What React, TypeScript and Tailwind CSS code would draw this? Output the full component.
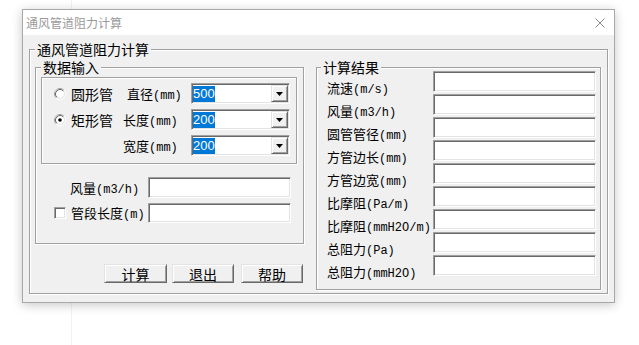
import React from "react";

const etched = "border border-[#a0a0a0] shadow-[inset_1px_1px_0_#fff,1px_1px_0_#fff]";
const sunken =
  "bg-white border border-t-[#a0a0a0] border-l-[#a0a0a0] border-r-white border-b-white shadow-[inset_1px_1px_0_#696969,inset_-1px_-1px_0_#e3e3e3]";
const raised =
  "bg-[#f0f0f0] border border-t-[#e3e3e3] border-l-[#e3e3e3] border-r-[#696969] border-b-[#696969] shadow-[inset_1px_1px_0_#fff,inset_-1px_-1px_0_#a0a0a0]";

const Label = ({ c, a, className = "" }: { c: string; a?: string; className?: string }) => (
  <span className={"block whitespace-nowrap leading-[16px] " + className}>
    <span className="text-[13px]">{c}</span>
    {a && <span className="font-['Liberation_Mono',monospace] text-[12px]">{a}</span>}
  </span>
);

const Radio = ({ checked }: { checked?: boolean }) => (
  <svg width="12" height="12" viewBox="0 0 12 12" className="shrink-0">
    <circle cx="6" cy="6" r="5.5" fill="none" stroke="#ffffff" />
    <path d="M2.11 9.89 A5.5 5.5 0 0 1 9.89 2.11" fill="none" stroke="#a0a0a0" />
    <circle cx="6" cy="6" r="4.5" fill="#fff" stroke="#e3e3e3" />
    <path d="M2.82 9.18 A4.5 4.5 0 0 1 9.18 2.82" fill="none" stroke="#696969" />
    {checked && <circle cx="6" cy="6" r="1.8" fill="#000" />}
  </svg>
);

const Combo = ({ value }: { value: string }) => (
  <div className={"w-[99px] h-[21px] flex items-center pl-[1px] pr-[1px] " + sunken}>
    <span className="flex-1 flex items-center">
      <span className="bg-[#0078d7] text-white font-['Liberation_Sans',sans-serif] text-[13px] leading-[16px]">
        {value}
      </span>
    </span>
    <span className={"w-[17px] h-[17px] flex items-center justify-center " + raised}>
      <svg width="7" height="4" viewBox="0 0 7 4">
        <polygon points="0,0 7,0 3.5,4" fill="#000" />
      </svg>
    </span>
  </div>
);

const Btn = ({ text, className = "" }: { text: string; className?: string }) => (
  <button className={"h-[19px] flex items-center justify-center text-[14px] leading-[16px] " + raised + " " + className}>
    {text}
  </button>
);

const results: [string, string][] = [
  ["流速", "(m/s)"],
  ["风量", "(m3/h)"],
  ["圆管管径", "(mm)"],
  ["方管边长", "(mm)"],
  ["方管边宽", "(mm)"],
  ["比摩阻", "(Pa/m)"],
  ["比摩阻", "(mmH2O/m)"],
  ["总阻力", "(Pa)"],
  ["总阻力", "(mmH2O)"],
];

export default function App() {
  return (
    <div className="relative w-[639px] h-[345px] bg-white overflow-hidden pt-[9px] pl-[22px] font-['Noto_Sans_CJK_SC',sans-serif] text-black">
      <div className="absolute left-[71px] top-0 h-full w-px bg-[#f2f2f2]" />
      <div className="relative w-[593px] h-[294px] border border-[#a8a8a8] bg-[#f0f0f0] shadow-[0_2px_10px_rgba(0,0,0,0.22)] flex flex-col">
        {/* title bar */}
        <div className="h-[25px] bg-white flex items-center justify-between pl-[3px] pr-[9px]">
          <span className="text-[12px] leading-[16px] text-[#9a9a9a]">通风管道阻力计算</span>
          <svg width="10" height="10" viewBox="0 0 10 10">
            <path d="M0.5 0.5 L9.5 9.5 M9.5 0.5 L0.5 9.5" stroke="#8a8a8a" strokeWidth="1" />
          </svg>
        </div>

        <div className="flex-1 px-[6px] pt-[5px]">
          <fieldset className={"min-w-0 pb-[3px] " + etched}>
            <legend className="ml-[5px] px-[2px] text-[14px] leading-[18px] bg-[#f0f0f0]">通风管道阻力计算</legend>
            <div className="flex pl-[5px] pr-[6px]">
              {/* left column */}
              <div className="w-[269px] flex flex-col">
                <fieldset className={"min-w-0 pb-[20px] " + etched}>
                  <legend className="ml-[5px] px-[2px] text-[14px] leading-[18px] bg-[#f0f0f0]">数据输入</legend>
                  <div className={"mt-[1px] ml-[5px] w-[256px] pt-[5px] pb-[7px] pl-[12px] flex flex-col gap-[5px] " + etched}>
                    <div className="h-[21px] flex items-center">
                      <div className="w-[69px] flex items-center gap-[5px]">
                        <Radio />
                        <span className="text-[14px] leading-[16px]">圆形管</span>
                      </div>
                      <div className="w-[68px] pl-[4px]">
                        <Label c="直径" a="(mm)" />
                      </div>
                      <Combo value="500" />
                    </div>
                    <div className="h-[21px] flex items-center">
                      <div className="w-[69px] flex items-center gap-[5px]">
                        <Radio checked />
                        <span className="text-[14px] leading-[16px]">矩形管</span>
                      </div>
                      <div className="w-[68px]">
                        <Label c="长度" a="(mm)" />
                      </div>
                      <Combo value="200" />
                    </div>
                    <div className="h-[21px] flex items-center">
                      <div className="w-[69px]" />
                      <div className="w-[68px]">
                        <Label c="宽度" a="(mm)" />
                      </div>
                      <Combo value="200" />
                    </div>
                  </div>

                  <div className="mt-[13px] flex flex-col gap-[5px]">
                    <div className="h-[21px] flex items-center">
                      <div className="w-[112px] pl-[34px]">
                        <Label c="风量" a="(m3/h)" />
                      </div>
                      <div className={"w-[143px] h-[21px] " + sunken} />
                    </div>
                    <div className="h-[20px] flex items-center">
                      <div className="w-[112px] pl-[18px] flex items-center gap-[5px]">
                        <span className={"w-[12px] h-[12px] shrink-0 " + sunken} />
                        <Label c="管段长度" a="(m)" />
                      </div>
                      <div className={"w-[143px] h-[20px] " + sunken} />
                    </div>
                  </div>
                </fieldset>

                <div className="mt-[20px] flex">
                  <Btn text="计算" className="ml-[69px] w-[63px]" />
                  <Btn text="退出" className="ml-[5px] w-[62px]" />
                  <Btn text="帮助" className="ml-[7px] w-[62px]" />
                </div>
              </div>

              {/* right group */}
              <fieldset className={"ml-[12px] w-[285px] min-w-0 pb-[13px] " + etched}>
                <legend className="ml-[4px] px-[2px] text-[14px] leading-[18px] bg-[#f0f0f0]">计算结果</legend>
                <div className="-mt-[5px] pl-[10px] pr-[4px] flex flex-col gap-[2px]">
                  {results.map(([c, a], i) => (
                    <div key={i} className="h-[21px] flex items-start">
                      <div className="w-[106px] pt-[7px]">
                        <Label c={c} a={a} />
                      </div>
                      <div className={"w-[163px] h-[21px] " + sunken} />
                    </div>
                  ))}
                </div>
              </fieldset>
            </div>
          </fieldset>
        </div>
      </div>
    </div>
  );
}
